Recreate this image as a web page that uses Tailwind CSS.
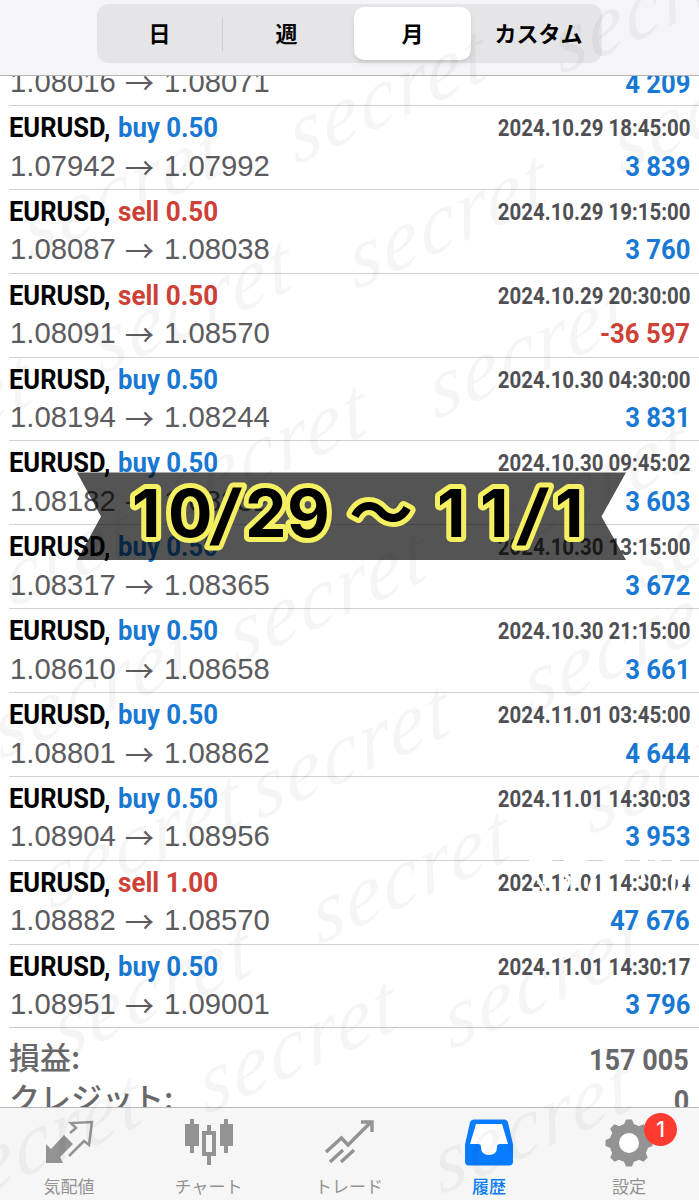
<!DOCTYPE html>
<html lang="ja">
<head>
  <meta charset="UTF-8" />
  <meta name="viewport" content="width=device-width, initial-scale=1.0" />
  <title>履歴</title>
  <script src="https://cdn.jsdelivr.net/npm/@tailwindcss/browser@4"></script>
</head>
<body class="bg-white font-['Roboto','Noto_Sans_CJK_JP',sans-serif]">
<div class="relative flex flex-col w-[699px] h-[1200px] overflow-hidden bg-white">
  <!-- Period switch -->
  <header class="shrink-0 h-[76px] bg-[#f5f5f8] border-b border-[#b4b4b6] pt-1 pl-[97px]">
    <div class="flex items-center w-[505px] h-[59px] rounded-xl bg-[#e5e5e8] font-['Noto_Sans_CJK_JP',sans-serif] font-bold text-[22px] text-black">
      <div class="w-[125px] -mt-0.5 text-center">日</div>
      <div class="w-px h-[34px] bg-[#cdcdd1]"></div>
      <div class="w-[127px] -mt-0.5 text-center">週</div>
      <div class="w-[4px]"></div>
      <div class="w-[117px] h-[53px] pb-0.5 flex items-center justify-center rounded-[10px] bg-white shadow-md">月</div>
      <div class="w-[131px] -mt-0.5 pl-1 text-center">カスタム</div>
    </div>
  </header>

  <!-- Deals -->
  <main class="grow min-h-0 overflow-hidden">
    <div class="h-[29px] overflow-hidden flex flex-col justify-end">
      <div class="shrink-0 h-[42px] pl-[10px] pr-[9px] flex items-center justify-between whitespace-nowrap text-[29.3px] text-[#5c5c60]">
        <div class="flex items-center -mt-1 font-['Liberation_Sans',sans-serif]">
          <span class="w-[105px]">1.08016</span>
          <span class="w-[49px] text-center font-['Noto_Sans_CJK_JP',sans-serif] leading-none">→</span>
          <span>1.08071</span>
        </div>
        <span class="mt-px font-bold text-[28.5px] text-[#1878d4] origin-right scale-x-[0.9]">4 209</span>
      </div>
    </div>
    <div id="deals"></div>

    <!-- Summary -->
    <div class="ml-[9px] border-t border-[#c9c9cb] pt-[9px] pr-[10px] text-[#68686a] whitespace-nowrap">
      <div class="h-[41px] flex items-center justify-between">
        <span class="-mt-1 font-['Noto_Sans_CJK_JP',sans-serif] font-medium text-[31px] leading-none">損益:</span>
        <span class="mt-1 font-bold text-[30px] leading-none origin-right scale-x-[0.9]">157 005</span>
      </div>
      <div class="h-[41px] flex items-center justify-between">
        <span class="-mt-1 font-['Noto_Sans_CJK_JP',sans-serif] font-medium text-[31px] leading-none">クレジット:</span>
        <span class="mt-1 font-bold text-[30px] leading-none origin-right scale-x-[0.9]">0</span>
      </div>
    </div>
  </main>

  <!-- Tab bar -->
  <nav class="shrink-0 h-[93px] border-t border-[#b8b8ba] bg-[#f6f6f6] flex pt-[10px] font-['Noto_Sans_CJK_JP',sans-serif] text-[17px] text-[#939393]">
    <a class="w-[138px] flex flex-col items-center">
      <svg class="shrink-0 w-[52px] h-[50px]" viewBox="0 0 52 50">
        <path d="M3 26 L8 31 L21 17 L30 26 L17 39 L20 45 L3 45 Z" fill="#939393" />
        <path d="M26 38 L41 23 L46 27 L49 4 L28 5 L33 10 L27 15" fill="none" stroke="#f6f6f6" stroke-width="5" />
        <path d="M26 38 L41 23 L46 27 L49 4 L28 5 L33 10 L27 15" fill="none" stroke="#939393" stroke-width="2.5" />
      </svg>
      <span class="leading-[35px]">気配値</span>
    </a>
    <a class="w-[141px] flex flex-col items-center">
      <svg class="shrink-0 w-[52px] h-[50px]" viewBox="0 0 52 50" fill="#939393">
        <path d="M7 1h4v5h5v22h-5v7H7v-7H2V6h5zM41 1h4v5h5v22h-5v7h-4v-7h-4V6h4z" />
        <path d="M24 7h4v6h5v25h-5v9h-4v-9h-5V13h5zM23 17v17h6V17z" fill-rule="evenodd" />
      </svg>
      <span class="leading-[35px]">チャート</span>
    </a>
    <a class="w-[140px] flex flex-col items-center">
      <svg class="shrink-0 w-[52px] h-[50px]" viewBox="0 0 52 50" fill="none" stroke="#939393" stroke-width="3.4">
        <path d="M3 34 L18.5 20 L25 27 L48 4 M38 4 H49 V14" />
        <path d="M7 44 L20 32 M18 44 L31 32" />
      </svg>
      <span class="leading-[35px]">トレード</span>
    </a>
    <a class="w-[140px] flex flex-col items-center text-[#087cf0]">
      <svg class="shrink-0 w-[52px] h-[50px]" viewBox="0 0 52 50">
        <path d="M11 1.500h30q3 0 4 3l5 22v17q0 4-4 4H6q-4 0-4-4v-17l5-22q1-3 4-3z" fill="#087cff" />
        <path d="M13 6h26l6 20H37q-3 0-3 3 0 8-8 8t-8-8q0-3-3-3H7z" fill="#fff" />
      </svg>
      <span class="leading-[35px] font-medium">履歴</span>
    </a>
    <a class="relative w-[140px] flex flex-col items-center">
      <svg class="shrink-0 w-[52px] h-[50px]" viewBox="0 0 52 50">
        <g id="gear" fill="#939393">
          <circle cx="26" cy="25" r="19.5" />
        </g>
        <circle cx="26" cy="25" r="10" fill="#fff" />
      </svg>
      <span class="leading-[35px]">設定</span>
      <span class="absolute left-[85px] -top-[5px] size-[33px] rounded-full bg-[#ff3b30] text-white font-['Inter',sans-serif] font-medium text-[21px] leading-[33px] text-center">1</span>
    </a>
  </nav>

  <!-- Watermark -->
  <svg id="watermark" class="absolute inset-0 w-[699px] h-[1200px] pointer-events-none" viewBox="0 0 699 1200" font-family="'Liberation Serif', serif" font-style="italic" font-size="84" letter-spacing="3" fill="#000" fill-opacity="0.04"></svg>

  <!-- Date range ribbon -->
  <svg class="absolute left-0 top-[460px] w-[699px] h-[110px]" viewBox="0 460 699 110">
    <path d="M77 472.5H626L601.5 516.5L626 560H77L101 516.5Z" fill="#000" fill-opacity="0.67" />
    <g font-family="Inter, sans-serif" font-weight="700" font-size="66" stroke="#f5f062" stroke-width="10" stroke-linejoin="round" paint-order="stroke" fill="#000">
      <text x="132 168" y="537">10</text>
      <text transform="translate(209 544) skewX(-12)" font-family="'Liberation Sans', sans-serif" font-size="78">/</text>
      <text x="245 287" y="537">29</text>
      <text x="349" y="536" font-size="64" font-family="'Noto Sans CJK JP', sans-serif">～</text>
      <text x="437 480" y="537">11</text>
      <text transform="translate(516 544) skewX(-12)" font-family="'Liberation Sans', sans-serif" font-size="78">/</text>
      <text x="555" y="537">1</text>
    </g>
  </svg>
</div>

<script>
  const deals = [
    ['buy', '0.50', '2024.10.29 18:45:00', '1.07942', '1.07992', '3 839'],
    ['sell', '0.50', '2024.10.29 19:15:00', '1.08087', '1.08038', '3 760'],
    ['sell', '0.50', '2024.10.29 20:30:00', '1.08091', '1.08570', '-36 597'],
    ['buy', '0.50', '2024.10.30 04:30:00', '1.08194', '1.08244', '3 831'],
    ['buy', '0.50', '2024.10.30 09:45:02', '1.08182', '1.08232', '3 603'],
    ['buy', '0.50', '2024.10.30 13:15:00', '1.08317', '1.08365', '3 672'],
    ['buy', '0.50', '2024.10.30 21:15:00', '1.08610', '1.08658', '3 661'],
    ['buy', '0.50', '2024.11.01 03:45:00', '1.08801', '1.08862', '4 644'],
    ['buy', '0.50', '2024.11.01 14:30:03', '1.08904', '1.08956', '3 953'],
    ['sell', '1.00', '2024.11.01 14:30:04', '1.08882', '1.08570', '47 676'],
    ['buy', '0.50', '2024.11.01 14:30:17', '1.08951', '1.09001', '3 796'],
  ];

  // white scratches over one of the dates
  const scratches = `
    <svg class="absolute right-0 -top-px w-[170px] h-[50px]" viewBox="0 0 170 50" stroke="#fff" fill="none">
      <path d="M0 .5h23M35 .5h23M74 .5h22M111 .5h8M126 .5h6M143 .5h8" stroke-width="3" />
      <path d="M5 12l10 18M35 14l7 6M41 21l-7 12M52 12l-3 9M66 14l-6 16M113 12l2 10M117 20l-7 5M145 14l-1 20M151 12l-4 7M158 12l-10 20" stroke-width="4" />
    </svg>`;

  const list = document.getElementById('deals');
  deals.forEach(([side, lot, time, open, close, profit]) => {
    const sideClass = side === 'buy' ? 'text-[#1878d4] scale-x-[0.92]' : 'text-[#cd4136] scale-x-[0.93]';
    const profitClass = profit.startsWith('-') ? 'text-[#cd4136]' : 'text-[#1878d4]';
    const div = document.createElement('div');
    div.className = 'relative h-[83.87px] ml-[9px] pr-[9px] border-t border-[#d0d0d2] pt-[5px] whitespace-nowrap';
    div.innerHTML = `
      <div class="h-[34px] flex items-center justify-between font-bold">
        <div class="flex text-[28px] leading-[34px]">
          <span class="w-[109px] text-black origin-left scale-x-[0.91]">EURUSD,</span>
          <span class="origin-left ${sideClass}">${side} ${lot}</span>
        </div>
        <span class="text-[23.5px] leading-[34px] text-[#505054] origin-right scale-x-[0.87]">${time}</span>
      </div>
      <div class="h-[41px] flex items-center justify-between text-[29.3px] leading-[40px] text-[#5c5c60]">
        <div class="flex items-center pl-px font-['Liberation_Sans',sans-serif]">
          <span class="w-[105px]">${open}</span>
          <span class="w-[49px] text-center font-['Noto_Sans_CJK_JP',sans-serif] leading-[34px]">→</span>
          <span>${close}</span>
        </div>
        <span class="mt-0.5 font-bold text-[28.5px] origin-right scale-x-[0.9] ${profitClass}">${profit}</span>
      </div>
      ${profit === '47 676' ? scratches : ''}`;
    list.appendChild(div);
  });

  // gear teeth
  const gear = document.getElementById('gear');
  for (let i = 0; i < 8; i++) {
    gear.innerHTML += `<path d="M20 9 L23 1.5 H29 L32 9 Z" transform="rotate(${i * 45} 26 25)" />`;
  }

  // watermark words
  const words = [
    [295, 165], [560, 75], [30, 260], [620, 175], [355, 290], [100, 375],
    [435, 420], [-160, 490], [175, 520], [640, 590], [-60, 640], [235, 665], [495, 555],
    [0, 760], [258, 820], [530, 715], [50, 910], [318, 945], [590, 835],
    [60, 1060], [450, 1050], [205, 1115], [-50, 1210], [440, 1195],
  ];
  document.getElementById('watermark').innerHTML = words
    .map(([x, y]) => `<text transform="translate(${x} ${y}) rotate(-24) skewX(-14)">secret</text>`)
    .join('');
</script>
</body>
</html>
